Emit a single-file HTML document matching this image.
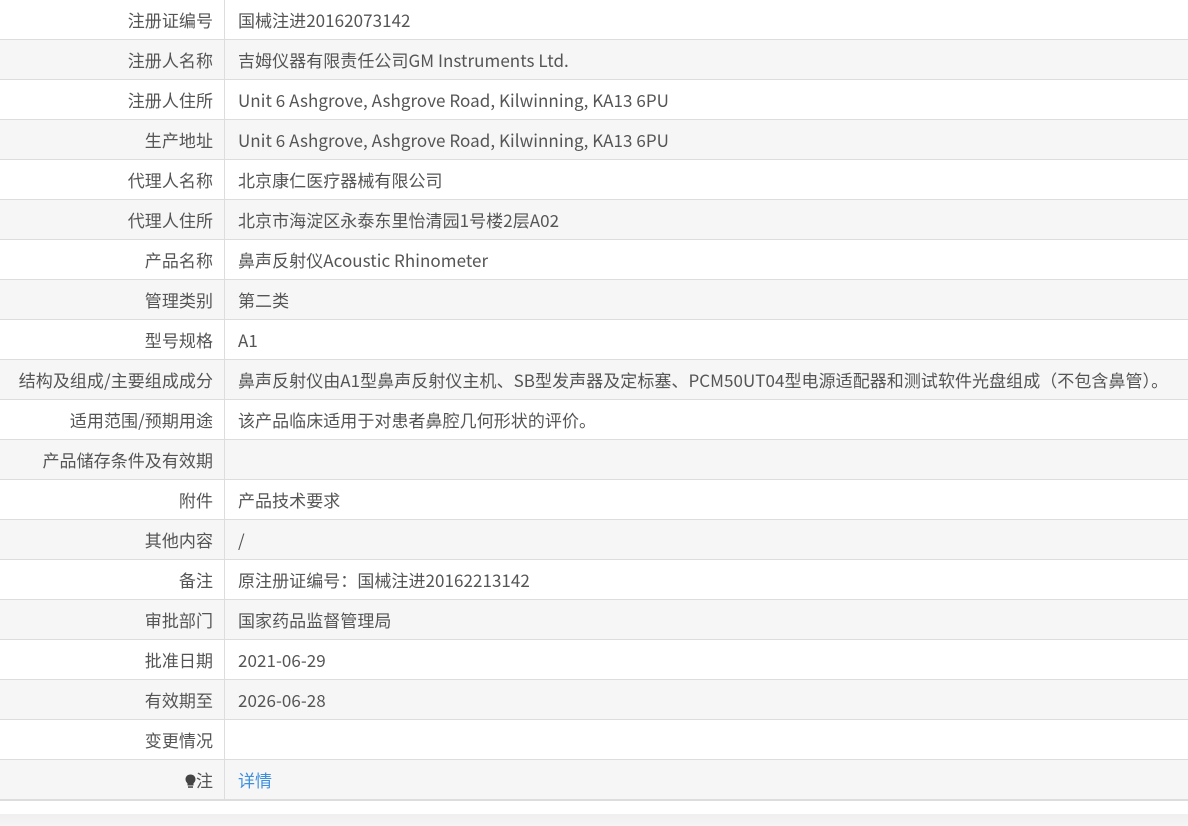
<!DOCTYPE html>
<html><head><meta charset="utf-8"><style>
body{margin:0;width:1188px;height:826px;background:#fff;font-family:"Noto Sans CJK SC",sans-serif;font-size:17px;letter-spacing:0.05px;color:#555;overflow:hidden;position:relative}
table{border-collapse:collapse;width:1188px;table-layout:fixed}
td{height:39px;line-height:39px;padding:0;border-bottom:1px solid #ddd;white-space:nowrap;vertical-align:middle;overflow:hidden}
td.l{width:213px;text-align:right;padding-right:11px;border-right:1px solid #ddd}
td.v{padding-left:13px}
tr:nth-child(even) td{background:#f6f6f6}
tr:last-child td{border-bottom:2px solid #ddd}
a{color:#3d8fe0;text-decoration:none}
.sh{position:absolute;left:0;top:814px;width:1188px;height:12px;background:linear-gradient(#f0f0f0,#f4f4f4)}
</style></head><body>
<table>
<tr><td class="l">注册证编号</td><td class="v">国械注进20162073142</td></tr>
<tr><td class="l">注册人名称</td><td class="v">吉姆仪器有限责任公司GM Instruments Ltd.</td></tr>
<tr><td class="l">注册人住所</td><td class="v">Unit 6 Ashgrove, Ashgrove Road, Kilwinning, KA13 6PU</td></tr>
<tr><td class="l">生产地址</td><td class="v">Unit 6 Ashgrove, Ashgrove Road, Kilwinning, KA13 6PU</td></tr>
<tr><td class="l">代理人名称</td><td class="v">北京康仁医疗器械有限公司</td></tr>
<tr><td class="l">代理人住所</td><td class="v">北京市海淀区永泰东里怡清园1号楼2层A02</td></tr>
<tr><td class="l">产品名称</td><td class="v">鼻声反射仪Acoustic Rhinometer</td></tr>
<tr><td class="l">管理类别</td><td class="v">第二类</td></tr>
<tr><td class="l">型号规格</td><td class="v">A1</td></tr>
<tr><td class="l">结构及组成/主要组成成分</td><td class="v">鼻声反射仪由A1型鼻声反射仪主机、SB型发声器及定标塞、PCM50UT04型电源适配器和测试软件光盘组成（不包含鼻管）。</td></tr>
<tr><td class="l">适用范围/预期用途</td><td class="v">该产品临床适用于对患者鼻腔几何形状的评价。</td></tr>
<tr><td class="l">产品储存条件及有效期</td><td class="v"></td></tr>
<tr><td class="l">附件</td><td class="v">产品技术要求</td></tr>
<tr><td class="l">其他内容</td><td class="v">/</td></tr>
<tr><td class="l">备注</td><td class="v">原注册证编号：国械注进20162213142</td></tr>
<tr><td class="l">审批部门</td><td class="v">国家药品监督管理局</td></tr>
<tr><td class="l">批准日期</td><td class="v">2021-06-29</td></tr>
<tr><td class="l">有效期至</td><td class="v">2026-06-28</td></tr>
<tr><td class="l">变更情况</td><td class="v"></td></tr>
<tr><td class="l"><svg width="11" height="15" viewBox="0 0 11 15" style="vertical-align:-2px"><path d="M5.5 0.5C2.5 0.5 0.5 2.6 0.5 5.3c0 2 1.2 3.2 2 4.2v2h6v-2c0.8-1 2-2.2 2-4.2C10.5 2.6 8.5 0.5 5.5 0.5z" fill="#444"/><rect x="3" y="12.3" width="5" height="1.5" fill="#444"/></svg>注</td><td class="v"><a>详情</a></td></tr>
</table>
<div class="sh"></div>
</body></html>
